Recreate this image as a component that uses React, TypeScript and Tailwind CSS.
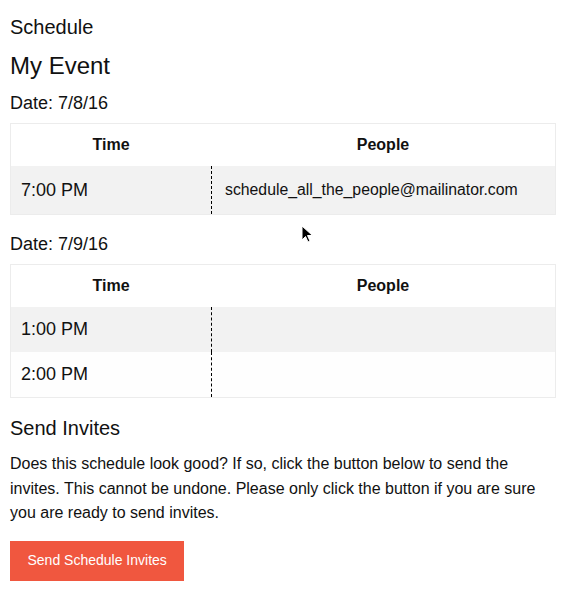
import React from 'react'

type Slot = { time: string; people: string }

const days: { date: string; rows: Slot[]; rowH: string }[] = [
  { date: '7/8/16', rowH: 'h-[48px]', rows: [{ time: '7:00 PM', people: 'schedule_all_the_people@mailinator.com' }] },
  {
    date: '7/9/16',
    rowH: 'h-[45px]',
    rows: [
      { time: '1:00 PM', people: '' },
      { time: '2:00 PM', people: '' },
    ],
  },
]

function DayTable({ rows, rowH }: { rows: Slot[]; rowH: string }) {
  return (
    <div className="w-[546px] border border-[#ececec]">
      {/* header */}
      <div className="grid grid-cols-[200px_1fr] h-[42px] items-center bg-white text-[16px] font-bold text-[#111]">
        <div className="text-center">Time</div>
        <div className="text-center">People</div>
      </div>
      {/* body */}
      {rows.map((r, i) => (
        <div
          key={r.time}
          className={`grid grid-cols-[200px_1fr] ${rowH} ${i % 2 === 0 ? 'bg-[#f2f2f2]' : 'bg-[#fefefe]'}`}
        >
          <div className="flex items-center pl-[10px] text-[18px] text-[#111]">{r.time}</div>
          <div className="flex items-center pl-[13px] border-l border-dashed border-black text-[15.8px] text-[#111]">
            {r.people}
          </div>
        </div>
      ))}
    </div>
  )
}

export default function App() {
  return (
    <div
      className="relative min-h-[589px] bg-white px-[10px] text-[#111]"
      style={{ fontFamily: '"Liberation Sans", Arial, sans-serif' }}
    >
      <h2 className="pt-[15px] text-[20px] leading-[24px]">Schedule</h2>
      <h1 className="mt-[13px] text-[24px] leading-[28px]">My Event</h1>

      {days.map((d, idx) => (
        <section key={d.date} className={idx === 0 ? 'mt-[12px]' : 'mt-[18px]'}>
          <div className="text-[18px] leading-[22px]">Date: {d.date}</div>
          <div className="mt-[9px]">
            <DayTable rows={d.rows} rowH={d.rowH} />
          </div>
        </section>
      ))}

      <h3 className="mt-[18px] text-[20px] leading-[24px]">Send Invites</h3>
      <p className="mt-[12px] w-[540px] text-[16px] leading-[24.5px]">
        Does this schedule look good? If so, click the button below to send the invites. This cannot be undone.
        Please only click the button if you are sure you are ready to send invites.
      </p>
      <button className="mt-[15px] h-[40px] px-[17.5px] bg-[#f0573f] text-white text-[14px]">
        Send Schedule Invites
      </button>

      {/* mouse cursor */}
      <svg className="absolute left-[301px] top-[225px]" width="13" height="19" viewBox="0 0 13 19">
        <path d="M1 1 L1 15 L4.5 11.5 L7 17 L9 16 L6.5 10.5 L11.5 10.5 Z" fill="#000" stroke="#fff" strokeWidth="1" />
      </svg>
    </div>
  )
}
